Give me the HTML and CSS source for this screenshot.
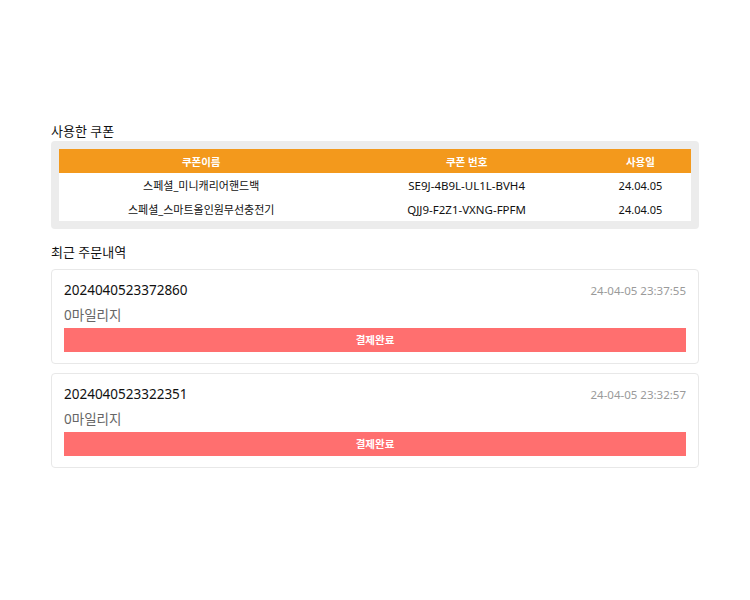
FILE: index.html
```html
<!DOCTYPE html>
<html lang="ko">
<head>
<meta charset="utf-8">
<link rel="stylesheet" href="styles.css">
</head>
<body>
<main class="wrap">
  <h2 class="title">사용한 쿠폰</h2>
  <div class="coupon-box">
    <table class="coupon-table">
      <thead>
        <tr><th class="c1">쿠폰이름</th><th class="c2">쿠폰 번호</th><th class="c3">사용일</th></tr>
      </thead>
      <tbody>
        <tr><td>스페셜_미니캐리어핸드백</td><td class="code">SE9J-4B9L-UL1L-BVH4</td><td>24.04.05</td></tr>
        <tr><td>스페셜_스마트올인원무선충전기</td><td class="code">QJJ9-F2Z1-VXNG-FPFM</td><td>24.04.05</td></tr>
      </tbody>
    </table>
  </div>

  <h2 class="title title-orders">최근 주문내역</h2>
  <div class="orders">
    <div class="order">
      <div class="order-top">
        <span class="order-no">2024040523372860</span>
        <span class="order-date">24-04-05 23:37:55</span>
      </div>
      <div class="mileage">0마일리지</div>
      <div class="status">결제완료</div>
    </div>
    <div class="order">
      <div class="order-top">
        <span class="order-no">2024040523322351</span>
        <span class="order-date">24-04-05 23:32:57</span>
      </div>
      <div class="mileage">0마일리지</div>
      <div class="status">결제완료</div>
    </div>
  </div>
</main>
</body>
</html>
```
FILE: styles.css
```css
* { box-sizing: border-box; }
html, body { margin: 0; padding: 0; background: #fff; }
body {
  font-family: "Noto Sans", "Noto Sans CJK KR", sans-serif;
  color: #111;
}
.wrap {
  width: 648px;
  margin: 0 auto;
  padding-top: 122px;
}
.title {
  margin: 0 0 1px;
  font-size: 13px;
  font-weight: 400;
  line-height: 18px;
  color: #111;
}
.title-orders {
  margin-top: 14px;
  margin-bottom: 8px;
}
.coupon-box {
  background: #ececec;
  border-radius: 4px;
  padding: 8px;
}
.coupon-table {
  width: 100%;
  border-collapse: collapse;
  table-layout: fixed;
  background: #fff;
  font-size: 11px;
}
.coupon-table th {
  background: #f3991c;
  color: #fff;
  font-weight: 700;
  font-size: 10.5px;
  height: 24px;
  padding: 0;
  text-align: center;
}
.coupon-table td {
  height: 24px;
  padding: 0;
  text-align: center;
  color: #111;
}
.coupon-table td.code { font-size: 11.5px; }
.c1 { width: 45%; }
.c2 { width: 39%; }
.c3 { width: 16%; }
.orders {
  display: flex;
  flex-direction: column;
  gap: 9px;
}
.order {
  border: 1px solid #e8e8e8;
  border-radius: 4px;
  padding: 11px 12px 11px 12px;
}
.order-top {
  display: flex;
  justify-content: space-between;
  align-items: center;
  height: 18px;
}
.order-no {
  font-size: 13.5px;
  color: #111;
}
.order-date {
  font-size: 11.5px;
  color: #9a9a9a;
}
.mileage {
  margin-top: 6px;
  font-size: 13.5px;
  line-height: 20px;
  color: #666;
}
.status {
  margin-top: 3px;
  height: 24px;
  line-height: 24px;
  background: #ff6f6f;
  color: #fff;
  font-size: 10.5px;
  font-weight: 700;
  text-align: center;
}
```
